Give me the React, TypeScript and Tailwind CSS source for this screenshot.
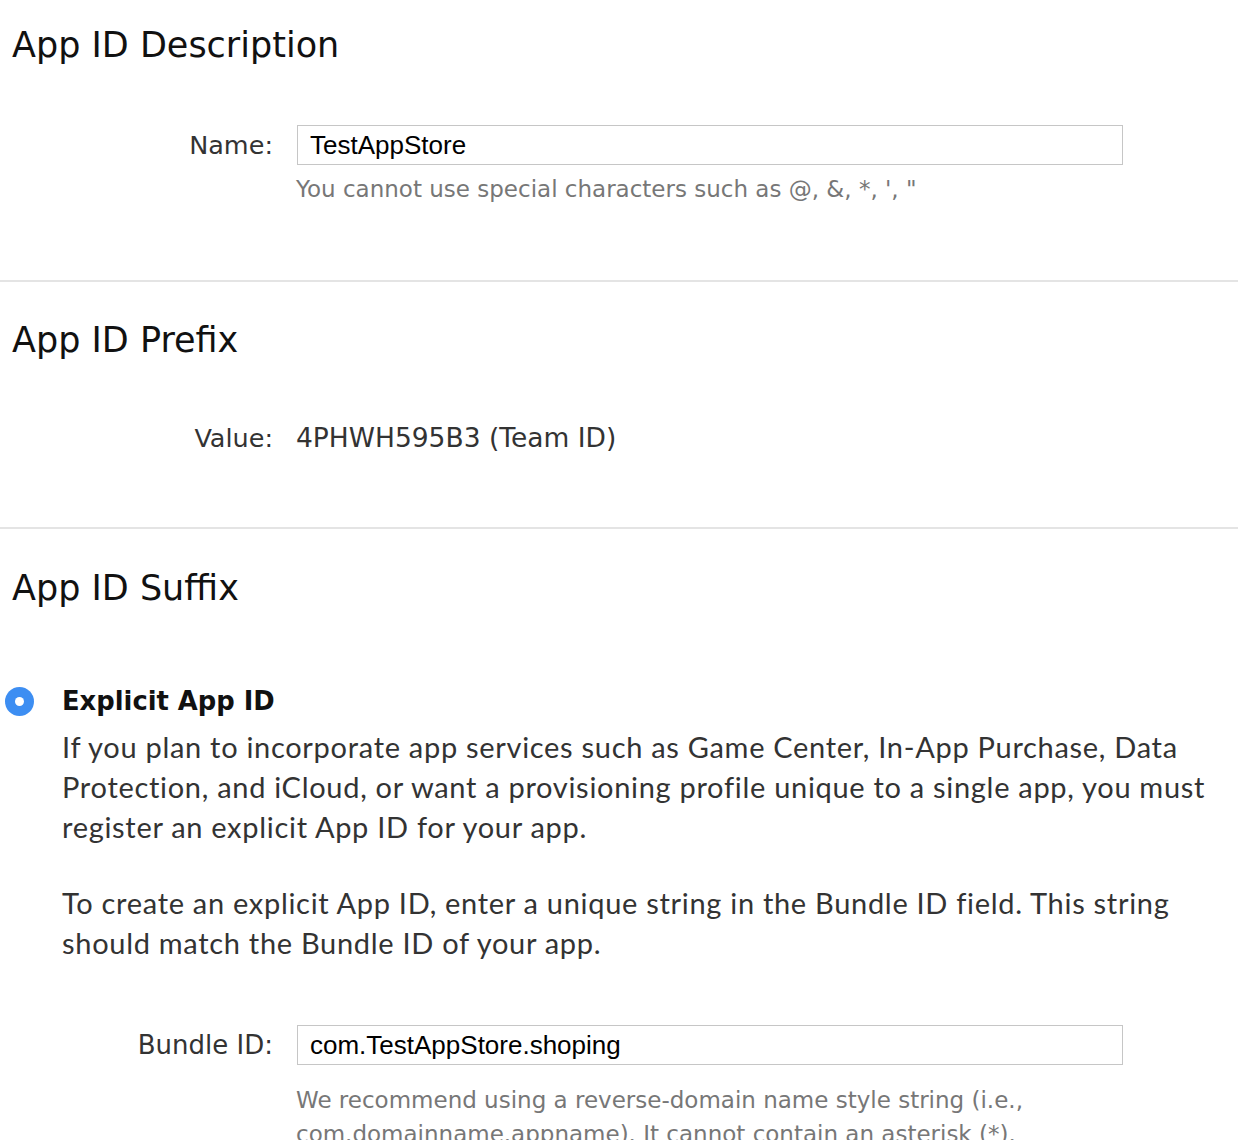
export default function App() {
  return (
    <div className="w-[1238px] h-[1140px] overflow-hidden bg-white text-[#333] font-['DejaVu_Sans',sans-serif]">
      {/* APP ID DESCRIPTION */}
      <section className="h-[280px] pt-[25px]">
        <h2 className="pl-[12px] text-[35px] leading-[40px] text-[#111]">App ID Description</h2>

        <div className="mt-[60px] flex items-center gap-[24px]">
          <label className="w-[273px] text-right text-[25.5px] leading-[40px]">Name:</label>
          <input
            readOnly
            value="TestAppStore"
            className="h-[40px] w-[826px] border border-[#c6c6c6] px-[12px] text-[26px] text-black font-['Liberation_Sans',sans-serif] outline-none"
          />
        </div>
        <p className="mt-[9px] pl-[296px] text-[23px] leading-[30px] text-[#777]">
          You cannot use special characters such as @, &amp;, *, ', "
        </p>
      </section>

      <div className="h-[2px] bg-[#e4e4e4]" />

      {/* APP ID PREFIX */}
      <section className="h-[245px] pt-[38px]">
        <h2 className="pl-[12px] text-[35px] leading-[40px] text-[#111]">App ID Prefix</h2>

        <div className="mt-[58px] flex items-center gap-[23px] leading-[40px]">
          <span className="w-[273px] text-right text-[25.5px]">Value:</span>
          <span className="text-[26.5px]">4PHWH595B3 (Team ID)</span>
        </div>
      </section>

      <div className="h-[2px] bg-[#e4e4e4]" />

      {/* APP ID SUFFIX */}
      <section className="pt-[39px]">
        <h2 className="pl-[12px] text-[35px] leading-[40px] text-[#111]">App ID Suffix</h2>

        <div className="mt-[75px] flex items-center">
          <span className="ml-[5px] flex h-[29px] w-[29px] items-center justify-center rounded-full bg-[#3d8ef2]">
            <span className="h-[9px] w-[9px] rounded-full bg-white" />
          </span>
          <span className="ml-[28px] text-[25.8px] leading-[36px] font-bold text-[#111]">Explicit App ID</span>
        </div>

        <div className="mt-[8px] pl-[62px] font-['Lato',sans-serif] text-[29px] leading-[40px] tracking-[0.7px] text-[#333] whitespace-nowrap">
          <p>
            <span className="block">If you plan to incorporate app services such as Game Center, In-App Purchase, Data</span>
            <span className="block">Protection, and iCloud, or want a provisioning profile unique to a single app, you must</span>
            <span className="block">register an explicit App ID for your app.</span>
          </p>
          <p className="mt-[36px]">
            <span className="block">To create an explicit App ID, enter a unique string in the Bundle ID field. This string</span>
            <span className="block">should match the Bundle ID of your app.</span>
          </p>
        </div>

        <div className="mt-[62px] flex items-center gap-[24px]">
          <label className="w-[273px] text-right text-[26px] leading-[40px]">Bundle ID:</label>
          <input
            readOnly
            value="com.TestAppStore.shoping"
            className="h-[40px] w-[826px] border border-[#c6c6c6] px-[12px] text-[26px] text-black font-['Liberation_Sans',sans-serif] outline-none"
          />
        </div>
        <p className="mt-[18px] pl-[296px] text-[23px] leading-[34px] text-[#777]">
          We recommend using a reverse-domain name style string (i.e.,
          <br />
          com.domainname.appname). It cannot contain an asterisk (*).
        </p>
      </section>
    </div>
  );
}
